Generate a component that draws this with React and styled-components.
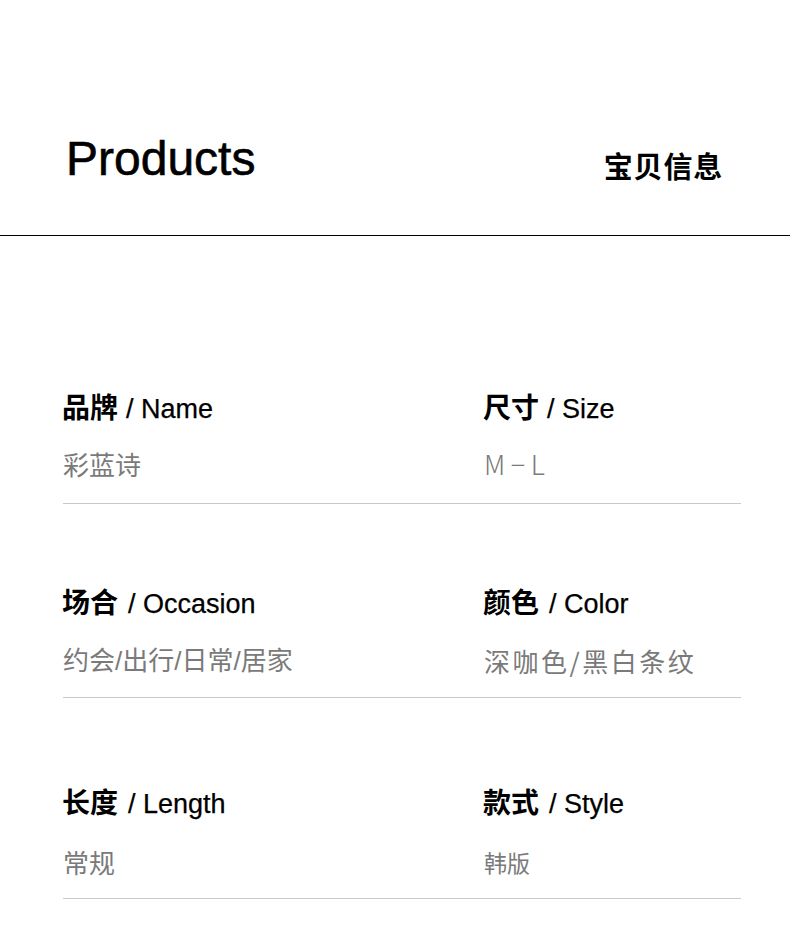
import React from 'react';
import styled, { createGlobalStyle } from 'styled-components';

const GlobalStyle = createGlobalStyle`
  html, body {
    margin: 0;
    padding: 0;
    background: #fff;
  }
  body {
    font-family: "Liberation Sans", "Noto Sans CJK SC", sans-serif;
    color: #000;
  }
`;

const Page = styled.main`
  width: 790px;
  height: 925px;
  background: #fff;
  overflow: hidden;
`;

const Header = styled.header`
  height: 236px;
  border-bottom: 1px solid #000;
  display: flex;
  justify-content: space-between;
  align-items: baseline;
  padding: 129px 67px 0 66px;
  box-sizing: border-box;
`;

const Title = styled.h1`
  margin: 0;
  font-family: "Liberation Sans", Arial, sans-serif;
  font-weight: 400;
  font-size: 48px;
  line-height: 60px;
  -webkit-text-stroke: 0.6px #000;
`;

const Subtitle = styled.div`
  font-family: "Noto Sans CJK SC", sans-serif;
  font-weight: 700;
  font-size: 29px;
  line-height: 60px;
  letter-spacing: 0.8px;
  position: relative;
  top: 3px;
`;

const Body = styled.section`
  padding: 155px 49px 0 63px;
`;

const Row = styled.div`
  display: flex;
  border-bottom: 1px solid #c9c9c9;
  padding-bottom: ${p => p.$pad}px;
  margin-top: ${p => p.$gap}px;
`;

const Cell = styled.div`
  flex: 0 0 ${p => p.$w}px;
  display: flex;
  flex-direction: column;
`;

const Label = styled.div`
  display: flex;
  align-items: baseline;
  height: 30px;
  line-height: 30px;
  white-space: nowrap;
`;

const LabelCn = styled.span`
  font-family: "Noto Sans CJK SC", sans-serif;
  font-weight: 700;
  font-size: 28px;
  margin-left: -1px;
`;

const LabelEn = styled.span`
  font-family: "Liberation Sans", Arial, sans-serif;
  font-size: 27px;
  -webkit-text-stroke: 0.25px #000;
  margin-left: ${p => p.$gap || 8}px;
`;

const Value = styled.div`
  height: 30px;
  margin-top: ${p => p.$top}px;
  font-family: ${p => (p.$latinSlash ? '"Liberation Sans", ' : '')}"Noto Sans CJK SC", sans-serif;
  font-weight: ${p => p.$weight || 400};
  font-size: ${p => p.$size || 26}px;
  letter-spacing: ${p => p.$spacing || 0}px;
  line-height: 30px;
  color: #7a7a7a;
  white-space: nowrap;
`;

const rows = [
  {
    gap: 0,
    top: 28,
    pad: 24,
    items: [
      { cn: '品牌', en: '/ Name', value: '彩蓝诗' },
      { cn: '尺寸', en: '/ Size', value: 'M−L', spacing: 5.5, size: 27, weight: 300 },
    ],
  },
  {
    gap: 82,
    top: 30,
    pad: 21,
    items: [
      { cn: '场合', en: '/ Occasion', value: '约会/出行/日常/居家', gap: 10, latinSlash: true },
      { cn: '颜色', en: '/ Color', value: '深咖色/黑白条纹', spacing: 2.5, gap: 10 },
    ],
  },
  {
    gap: 88,
    top: 31,
    pad: 21,
    items: [
      { cn: '长度', en: '/ Length', value: '常规', gap: 10 },
      { cn: '款式', en: '/ Style', value: '韩版', size: 23, gap: 10 },
    ],
  },
];

function Item({ item, width, top }) {
  return (
    <Cell $w={width}>
      <Label>
        <LabelCn>{item.cn}</LabelCn>
        <LabelEn $gap={item.gap}>{item.en}</LabelEn>
      </Label>
      <Value
        $top={top}
        $size={item.size}
        $spacing={item.spacing}
        $weight={item.weight}
        $latinSlash={item.latinSlash}
      >
        {item.value}
      </Value>
    </Cell>
  );
}

export default function App() {
  return (
    <>
      <GlobalStyle />
      <Page>
        <Header>
          <Title>Products</Title>
          <Subtitle>宝贝信息</Subtitle>
        </Header>
        <Body>
          {rows.map((row, i) => (
            <Row key={i} $gap={row.gap} $pad={row.pad}>
              <Item item={row.items[0]} width={421} top={row.top} />
              <Item item={row.items[1]} width={257} top={row.top} />
            </Row>
          ))}
        </Body>
      </Page>
    </>
  );
}
